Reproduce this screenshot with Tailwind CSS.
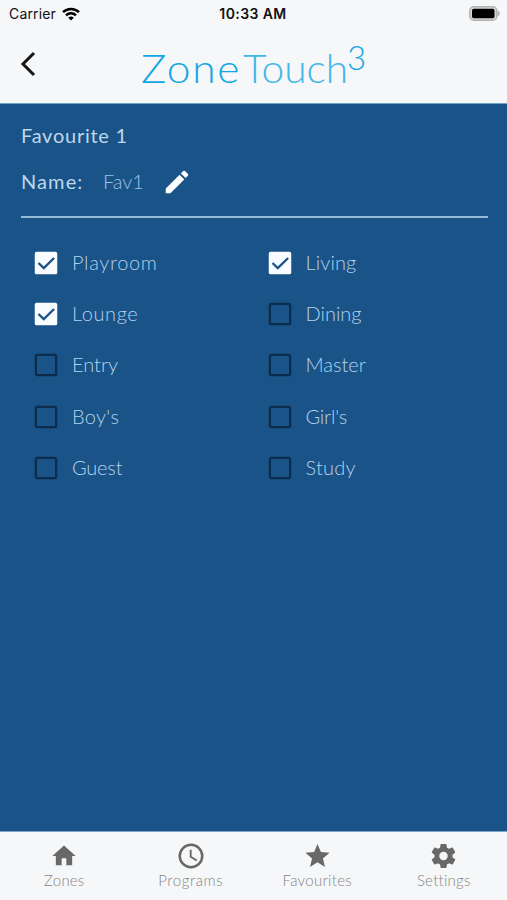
<!DOCTYPE html>
<html lang="en">
<head>
    <meta charset="UTF-8">
    <meta name="viewport" content="width=device-width, initial-scale=1.0">
    <title>ZoneTouch 3 - Favourite 1</title>
    <script src="https://cdn.jsdelivr.net/npm/@tailwindcss/browser@4"></script>
</head>
<body class="h-[900px] flex flex-col overflow-hidden bg-[#1a5387] font-['Lato',sans-serif]">
    <header class="h-[104px] shrink-0 bg-[#f5f7f9] border-b border-[#6fa3c4]">
        <!-- Status bar -->
        <div class="h-[27px] grid grid-cols-3 items-center pl-[9px] pr-[7px] font-['Inter',sans-serif] text-[#111]">
            <div class="flex items-center gap-[6px]">
                <span class="text-[14px] tracking-[0.15px]">Carrier</span>
                <svg class="w-[18px] h-[14px]" viewBox="0 0 18 14" fill="none" stroke="#000" stroke-width="2.5">
                    <path d="M1 5.2a11.3 11.3 0 0 1 16 0M4 8.4a7.1 7.1 0 0 1 10 0"/>
                    <path d="M9 13.6 6.2 10.8a4 4 0 0 1 5.6 0z" fill="#000" stroke="none"/>
                </svg>
            </div>
            <span class="text-[14px] font-semibold text-center tracking-[0.4px] -ml-[3px]">10:33 AM</span>
            <svg class="w-[31px] h-[15px] justify-self-end" viewBox="0 0 31 15">
                <rect x="0.8" y="0.8" width="27" height="13.4" rx="4" fill="#d5d6d7" stroke="#b3b3b3" stroke-width="1.5"/>
                <rect x="3" y="2.8" width="22.5" height="9.4" rx="1.8" fill="#000"/>
                <path d="M28.5 4.5c3 1 3 5 0 6z" fill="#b3b3b3"/>
            </svg>
        </div>
        <div class="h-[76px] grid grid-cols-[60px_1fr_60px]">
            <svg class="w-4 h-[26px] ml-5 mt-[24px]" viewBox="0 0 16 26" fill="none" stroke="#151515" stroke-width="3">
                <path d="M14 2 3 13l11 11"/>
            </svg>
            <svg class="w-full h-[76px]" viewBox="60 27 387 76" font-weight="300">
                <text x="141" y="83" font-size="39" fill="#14a5e3" letter-spacing="1.5" textLength="100" lengthAdjust="spacingAndGlyphs">Zone</text>
                <text x="243" y="83" font-size="39" fill="#43b6e8" textLength="105" lengthAdjust="spacingAndGlyphs">Touch</text>
                <text x="347" y="70" font-size="33" fill="#14a5e3">3</text>
            </svg>
            <span></span>
        </div>
    </header>

    <main class="flex-1 px-[21px] pt-[17px] text-[#b3d2ec]">
        <h1 class="h-7 leading-7 text-[20px] tracking-[0.75px] text-[#bdd7ec]">Favourite 1</h1>
        <div class="mt-[19px] h-7 flex items-center">
            <span class="w-[82px] text-[20px] leading-7 pb-[2px] tracking-[1.1px] text-[#bdd7ec]">Name:</span>
            <span class="w-[61px] text-[20px] leading-7 pb-[2px] font-light text-[#9cc4e4]">Fav1</span>
            <svg class="w-[30px] h-[30px] -ml-[2px]" viewBox="0 0 24 24" fill="#fff">
                <path d="M3 17.25V21h3.75L17.81 9.94l-3.75-3.75L3 17.25zM20.71 7.04a1 1 0 0 0 0-1.41l-2.34-2.34a1 1 0 0 0-1.41 0l-1.83 1.83 3.75 3.75 1.83-1.83z"/>
            </svg>
        </div>
        <div class="mt-[20px] h-[2px] w-[467px] bg-[#94bad8]"></div>
        <div id="zones" class="mt-[19px] pl-[10px] grid grid-cols-[233.5px_1fr] auto-rows-[51.3px]"></div>
    </main>

    <nav class="h-[69px] shrink-0 grid grid-cols-4 pl-[1px] bg-[#f5f7f9] border-t border-[#7eaac8] text-[15px] text-[#858585] font-light">
        <div class="flex flex-col items-center pt-[9px]">
            <svg class="w-7 h-[30px]" viewBox="0 0 24 24" fill="#686868"><path d="M10 20v-6h4v6h5v-8h3L12 3 2 12h3v8z"/></svg>
            <span class="-mt-px leading-5 tracking-[0.2px]">Zones</span>
        </div>
        <div class="flex flex-col items-center pt-[9px]">
            <svg class="w-[30px] h-[30px]" viewBox="0 0 24 24" fill="#686868"><path d="M12 2a10 10 0 1 0 0 20 10 10 0 0 0 0-20zm0 18a8 8 0 1 1 0-16 8 8 0 0 1 0 16zm.5-13H11v6l5.25 3.15.75-1.23-4.5-2.67z"/></svg>
            <span class="-mt-px leading-5 tracking-[0.6px]">Programs</span>
        </div>
        <div class="flex flex-col items-center pt-[9px]">
            <svg class="w-[29px] h-[30px]" viewBox="0 0 24 24" fill="#686868"><path d="M12 17.27 18.18 21l-1.64-7.03L22 9.24l-7.19-.61L12 2 9.19 8.63 2 9.24l5.46 4.73L5.82 21z"/></svg>
            <span class="-mt-px leading-5 tracking-[0.3px]">Favourites</span>
        </div>
        <div class="flex flex-col items-center pt-[9px]">
            <svg class="w-[29px] h-[30px]" viewBox="0 0 24 24" fill="#686868"><path d="M19.43 12.98c.04-.32.07-.64.07-.98s-.03-.66-.07-.98l2.11-1.65c.19-.15.24-.42.12-.64l-2-3.46c-.12-.22-.39-.3-.61-.22l-2.49 1c-.52-.4-1.08-.73-1.69-.98l-.38-2.65A.49.49 0 0 0 14 2h-4c-.25 0-.46.18-.49.42l-.38 2.65c-.61.25-1.17.59-1.69.98l-2.49-1c-.23-.09-.49 0-.61.22l-2 3.46c-.13.22-.07.49.12.64l2.11 1.65c-.04.32-.07.65-.07.98s.03.66.07.98l-2.11 1.65c-.19.15-.24.42-.12.64l2 3.46c.12.22.39.3.61.22l2.49-1c.52.4 1.08.73 1.69.98l.38 2.65c.03.24.24.42.49.42h4c.25 0 .46-.18.49-.42l.38-2.65c.61-.25 1.17-.59 1.69-.98l2.49 1c.23.09.49 0 .61-.22l2-3.46c.12-.22.07-.49-.12-.64l-2.11-1.65zM12 15.5a3.5 3.5 0 1 1 0-7 3.5 3.5 0 0 1 0 7z"/></svg>
            <span class="-mt-px leading-5 tracking-[0.25px]">Settings</span>
        </div>
    </nav>

    <script>
        const zones = [
            ["Playroom", true, "tracking-[0.65px]"], ["Living", true, "tracking-[0.1px]"],
            ["Lounge", true, "tracking-[0.6px]"], ["Dining", false, "tracking-[0px]"],
            ["Entry", false, "tracking-[0px]"], ["Master", false, "tracking-[0px]"],
            ["Boy's", false, "tracking-[0.3px]"], ["Girl's", false, "tracking-[-0.2px]"],
            ["Guest", false, "tracking-[-0.2px]"], ["Study", false, "tracking-[0.2px]"]
        ];
        const checked = `<rect x="3" y="3" width="18" height="18" rx="1.5" fill="#f8fbff"/><path d="m6 12 4.2 4L18.5 8" fill="none" stroke="#1a5387" stroke-width="1.9"/>`;
        const unchecked = `<rect x="3.9" y="3.9" width="16.2" height="16.2" rx="1.2" fill="none" stroke="#0b2c4d" stroke-width="1.8"/>`;

        document.getElementById("zones").innerHTML = zones.map(([name, on, tracking]) => `
            <label class="flex items-center gap-[11px]">
                <svg class="w-[30px] h-[30px]" viewBox="0 0 24 24">${on ? checked : unchecked}</svg>
                <span class="pb-[2px] text-[20px] font-light ${tracking}">${name}</span>
            </label>`).join("");
    </script>
</body>
</html>
